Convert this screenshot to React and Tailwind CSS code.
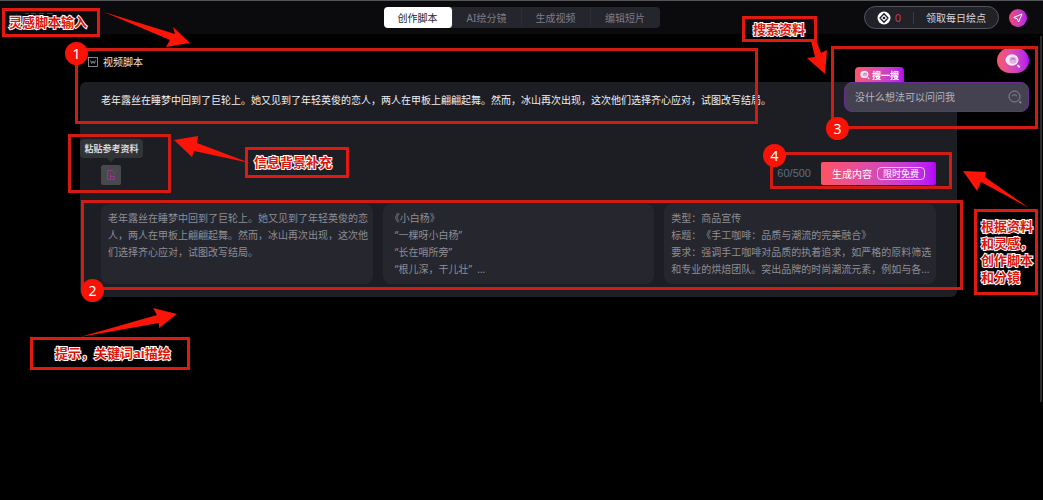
import { useState } from "react";

const PROMPT =
  "老年露丝在睡梦中回到了巨轮上。她又见到了年轻英俊的恋人，两人在甲板上翩翩起舞。然而，冰山再次出现，这次他们选择齐心应对，试图改写结局。";

const TABS = ["创作脚本", "AI绘分镜", "生成视频", "编辑短片"];

const SAMPLES = [
  PROMPT,
  "《小白杨》\n  “一棵呀小白杨”\n  “长在哨所旁”\n  “根儿深，干儿壮”  ...",
  "类型：商品宣传\n标题：《手工咖啡：品质与潮流的完美融合》\n要求：强调手工咖啡对品质的执着追求，如严格的原料筛选和专业的烘焙团队。突出品牌的时尚潮流元素，例如与各...",
];

/* ================= ICONS ================= */
function BubbleSearchIcon({ className }) {
  return (
    <svg viewBox="0 0 16 16" className={className} aria-hidden="true">
      <ellipse cx="7" cy="7" rx="6.500" ry="5.800" fill="#f8e6fa" />
      <circle cx="8" cy="7.200" r="3.600" fill="#dcb4e4" />
      <path d="M5.800 6.600a2.600 2.600 0 0 1 4.400 0" fill="none" stroke="#a85cb8" strokeWidth="1" strokeLinecap="round" />
      <path d="M13 12.600l1.200 1.200" stroke="#fbe4fb" strokeWidth="2" strokeLinecap="round" />
    </svg>
  );
}

function LineSearchIcon() {
  return (
    <svg viewBox="0 0 14 14" className="size-3.5" fill="none" stroke="#8d8b98" aria-hidden="true">
      <circle cx="6.500" cy="6.500" r="5.500" />
      <path d="M4.300 5.800a2.600 2.600 0 0 1 4.400 0" strokeLinecap="round" />
      <path d="M12 12l.6.6" strokeWidth="1.800" strokeLinecap="round" />
    </svg>
  );
}

function CoinIcon() {
  return (
    <svg viewBox="0 0 14 14" className="size-3.5" aria-hidden="true">
      <circle cx="7" cy="7" r="6.500" fill="#fff" />
      <path d="M7 2.800L11 7 7 11.200 3 7z" fill="none" stroke="#1c1c22" strokeWidth="1.300" strokeLinejoin="round" />
      <circle cx="7" cy="7" r="1.300" fill="#1c1c22" />
    </svg>
  );
}

function PasteIcon() {
  return (
    <svg viewBox="0 0 12 12" className="size-3" fill="none" stroke="#96358f" aria-hidden="true">
      <path d="M5 10.500H2.500v-9h4.500l2.500 2.500v1" />
      <path d="M5.500 5v5.500h4V7.500h-4" />
    </svg>
  );
}

/* ================= HEADER ================= */
function Header() {
  const [active, setActive] = useState(0);

  return (
    <header className="grid h-[34px] grid-cols-[1fr_auto_1fr] items-center border-t border-[#55565a] bg-[#0b0b0e] px-4">
      <a href="#home" aria-label="返回" className="-mt-1 w-fit">
        <svg viewBox="0 0 40 8" className="h-2 w-10" fill="none" stroke="#3c3c42" aria-hidden="true">
          <path d="M-4 2h4v4M9 1.500h4M15 1.500h5M23 1.500h5M31 1.500h6" />
        </svg>
      </a>

      <nav className="flex h-[21px] divide-x divide-[#2c2c36] rounded-sm bg-[#25252e]">
        {TABS.map((tab, i) => (
          <button
            key={tab}
            onClick={() => setActive(i)}
            className={
              i === active
                ? "w-[69px] rounded-sm bg-white text-[#26262b]"
                : "w-[69px] text-[#7d7d87]"
            }
          >
            {tab}
          </button>
        ))}
      </nav>

      <div className="flex items-center gap-2.5 justify-self-end">
        <div className="flex h-[23px] items-center rounded-full border border-[#55555f] bg-[#212128] px-3">
          <CoinIcon />
          <span className="ml-1 text-[11px] text-[#c23a5e]">0</span>
          <span className="mx-3 h-3 w-px bg-[#3b3b44]" />
          <button className="text-[#d6d6da]">领取每日绘点</button>
        </div>
        <button
          aria-label="发送"
          className="flex size-[18px] items-center justify-center rounded-full bg-linear-to-r from-[#f0446f] to-[#b416ea]"
        >
          <svg viewBox="0 0 12 12" className="size-3" fill="none" stroke="#fff" strokeLinejoin="round" aria-hidden="true">
            <path d="M10 2L1.800 5.400l3.400 1.400L6.600 10z" />
          </svg>
        </button>
      </div>
    </header>
  );
}

/* ================= SEARCH ================= */
function SearchFloat() {
  return (
    <div className="absolute top-12 right-3.5 flex w-[185px] flex-col">
      <button
        aria-label="搜索"
        className="flex h-[25px] w-8 items-center justify-center self-end rounded-full bg-linear-to-r from-[#fb5566] to-[#b400f4]"
      >
        <BubbleSearchIcon className="size-4" />
      </button>
      <label
        htmlFor="ask"
        className="-mt-1.5 ml-[11px] flex h-4 w-[49px] items-center justify-center gap-0.5 rounded-t-sm bg-linear-to-r from-[#fb5566] to-[#b400f4] text-[9px] font-bold text-white"
      >
        <BubbleSearchIcon className="size-2.5" />
        搜一搜
      </label>
      <div className="-mt-px flex h-[30px] items-center rounded-lg border border-[#6a2b96] bg-[#444250] pr-1.5 pl-2.5">
        <input
          id="ask"
          placeholder="没什么想法可以问问我"
          className="min-w-0 flex-1 bg-transparent outline-none placeholder:text-[#b5b3bf]"
        />
        <LineSearchIcon />
      </div>
    </div>
  );
}

/* ================= SCRIPT PANEL ================= */
function ScriptPanel() {
  const [text, setText] = useState(PROMPT);

  return (
    <main className="pt-5 pr-[86px] pl-20">
      <label htmlFor="script" className="flex h-4 items-center gap-[5px] pl-2 text-[#e8e8ea]">
        <svg viewBox="0 0 10 10" className="size-2.5" fill="none" stroke="#a9a9ae" strokeWidth="0.8" aria-hidden="true">
          <rect x="0.500" y="0.500" width="9" height="9" />
          <path d="M2.500 3.500l1.200 3L5 4l1.300 2.500 1.200-3" />
        </svg>
        视频脚本
      </label>

      <section className="mt-3 rounded-md bg-[#1d1e23] px-[21px] pt-2.5 pb-[13px]">
        <textarea
          id="script"
          value={text}
          onChange={(e) => setText(e.target.value)}
          className="block h-[47px] w-full resize-none bg-transparent leading-[17px] text-[#f0f0f2] outline-none"
        />

        <div className="flex items-end justify-between">
          <div className="-ml-[21px]">
            <div className="relative flex h-[19px] w-[63px] items-center justify-center rounded-sm bg-[#333437] text-[9px] font-bold text-[#d8d8da]">
              粘贴参考资料
              <span className="absolute top-full left-[27px] size-0 border-x-4 border-t-4 border-x-transparent border-t-[#333437]" />
            </div>
            <button
              aria-label="粘贴参考资料"
              className="mt-[7px] ml-[21px] flex size-5 items-center justify-center rounded-xs bg-[#48494c]"
            >
              <PasteIcon />
            </button>
          </div>

          <div className="flex items-center gap-2.5">
            <span className="font-['Liberation_Sans',sans-serif] text-[11px] text-[#5d6e80]">60/500</span>
            <button className="flex h-[23px] w-[115px] items-center justify-center gap-[5px] rounded-xs bg-linear-to-r from-[#ff5161] to-[#b400fa] text-white">
              生成内容
              <span className="flex h-[13px] items-center rounded-sm border border-[#f3c4f3] px-[5px] text-[9px]">
                限时免费
              </span>
            </button>
          </div>
        </div>

        <div className="mt-[19px] grid grid-cols-3 gap-2.5">
          {SAMPLES.map((s) => (
            <button
              key={s}
              onClick={() => setText(s)}
              className="flex h-20 items-start rounded-lg bg-[#25262e] pt-1.5 pr-1 pl-[7px] text-left leading-[17px] break-all whitespace-pre-wrap text-[#8e8e95] [text-spacing-trim:space-all]"
            >
              {s}
            </button>
          ))}
        </div>
      </section>
    </main>
  );
}

/* ================= ANNOTATIONS ================= */
const FRAMES = [
  "left-[75px] top-[48px] w-[683px] h-[76px]",
  "left-[81px] top-[200px] w-[882px] h-[90px]",
  "left-[831px] top-[46px] w-[207px] h-[83px]",
  "left-[770px] top-[152px] w-[182px] h-[37px]",
  "left-[68px] top-[134px] w-[103px] h-[59px]",
];

const NOTES = [
  { text: "灵感脚本输入", box: "left-[2px] top-[8px] w-[98px] h-[29px] pl-1" },
  { text: "搜索资料", box: "left-[742px] top-[16px] w-[75px] h-[26px] pl-2" },
  { text: "信息背景补充", box: "left-[245px] top-[147px] w-[104px] h-[31px] pl-1.5" },
  { text: "根据资料\n和灵感，\n创作脚本\n和分镜", box: "left-[974px] top-[209px] w-[64px] h-[86px] pl-1" },
  { text: "提示，关键词ai描绘", box: "left-[30px] top-[337px] w-[160px] h-[33px] pl-[22px]" },
];

const STEPS = [
  "left-[65px] top-[42px]",
  "left-[81px] top-[279px]",
  "left-[826px] top-[117px]",
  "left-[763px] top-[144px]",
];

const ARROWS = [
  "M104 12L175 34L173 27L190 43L166 47L170 40Z",
  "M811 41L817 42L821 53L827 50L825 74L807 58L815 57Z",
  "M250 163L194 151L192 157L174 140L198 136L197 143Z",
  "M1029 208L981 182L977 191L963 171L986 172L985 177Z",
  "M80 337L157 315L153 308L177 314L159 328L159 323Z",
];

function Annotations() {
  return (
    <div className="pointer-events-none absolute top-0 left-0">
      {FRAMES.map((f) => (
        <div key={f} className={`absolute border-3 border-[#d11c13] ${f}`} />
      ))}

      <svg viewBox="0 0 1043 500" className="absolute top-0 left-0 h-[500px] w-[1043px] max-w-none" fill="#fb1508" aria-hidden="true">
        {ARROWS.map((d) => (
          <path key={d} d={d} />
        ))}
      </svg>

      {NOTES.map((n) => (
        <div
          key={n.text}
          className={`absolute flex items-center border-3 border-[#e01a10] text-[13px] leading-[17px] font-bold whitespace-pre text-[#e0140c] [-webkit-text-stroke:2px_#fff] [paint-order:stroke] ${n.box}`}
        >
          {n.text}
        </div>
      ))}

      {STEPS.map((pos, i) => (
        <span
          key={pos}
          className={`absolute flex size-[23px] items-center justify-center rounded-full bg-[#fb1206] text-[14px] text-white ${pos}`}
        >
          {i + 1}
        </span>
      ))}
    </div>
  );
}

export default function App() {
  return (
    <div className="relative min-h-screen overflow-hidden bg-black font-['Noto_Sans','Noto_Sans_CJK_SC',sans-serif] text-[10px] leading-none">
      <Header />
      <ScriptPanel />
      <SearchFloat />
      <div className="absolute top-9 right-px h-[366px] w-0.5 bg-[#2b2b2d]" />
      <Annotations />
    </div>
  );
}
